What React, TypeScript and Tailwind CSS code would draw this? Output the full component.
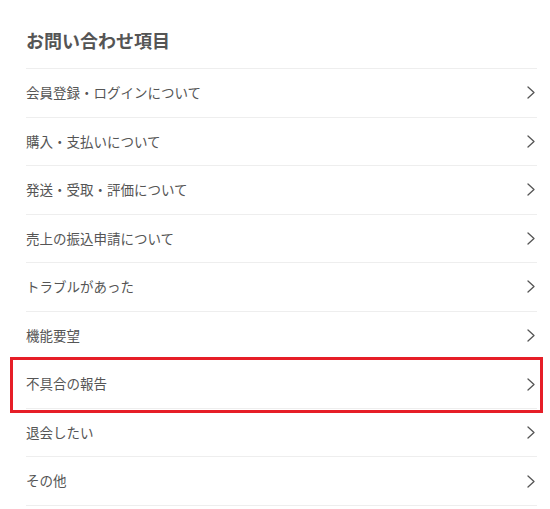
const items = [
  '会員登録・ログインについて',
  '購入・支払いについて',
  '発送・受取・評価について',
  '売上の振込申請について',
  'トラブルがあった',
  '機能要望',
  '不具合の報告',
  '退会したい',
  'その他',
]

function Chevron() {
  return (
    <svg width="8" height="13" viewBox="0 0 8 13" fill="none" className="shrink-0">
      <polyline points="1,1 7,6.5 1,12" stroke="#555" strokeWidth="1.3" strokeLinecap="round" strokeLinejoin="round" />
    </svg>
  )
}

export default function App() {
  return (
    <div
      className="relative w-[550px] h-[509px] bg-white pl-[26px] pr-[13px] overflow-hidden"
      style={{ fontFamily: '"Noto Sans CJK JP", "Noto Sans", sans-serif' }}
    >
      {/* Heading */}
      <h2 className="pt-[27px] pb-[14px] leading-[27px] text-[18px] font-bold text-[#555]">
        お問い合わせ項目
      </h2>

      {/* List */}
      <ul className="border-t border-[#eeeeee]">
        {items.map((label) => (
          <li
            key={label}
            className="h-[48.56px] border-b border-[#eeeeee] flex items-center justify-between pr-[2px]"
          >
            <span className="text-[13.5px] text-[#555] leading-none">{label}</span>
            <Chevron />
          </li>
        ))}
      </ul>

      {/* highlight annotation */}
      <div className="absolute left-[10px] top-[357px] w-[533px] h-[56px] border-[3px] border-[#e61e28] pointer-events-none" />
    </div>
  )
}
